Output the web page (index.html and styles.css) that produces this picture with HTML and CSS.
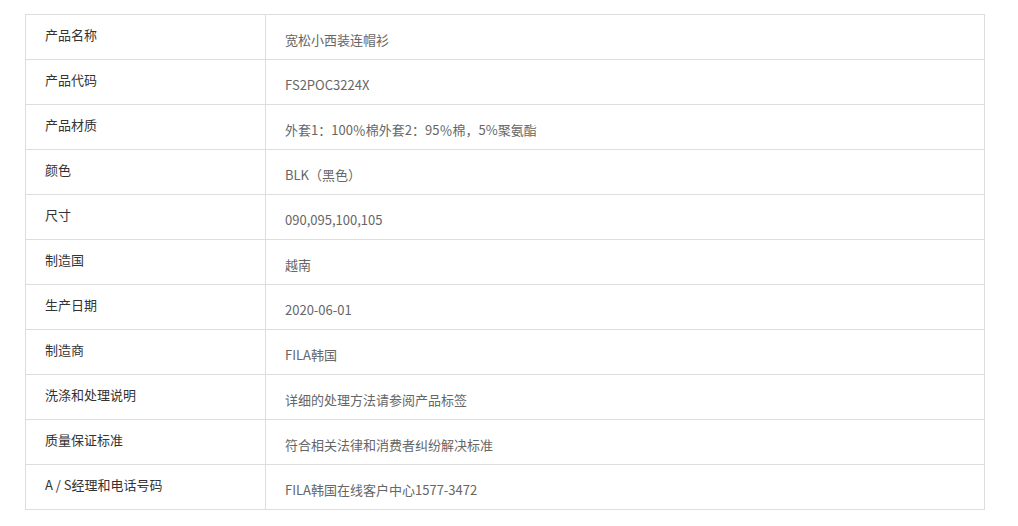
FILE: index.html
```html
<!DOCTYPE html>
<html lang="zh">
<head>
<meta charset="utf-8">
<link rel="stylesheet" href="styles.css">
</head>
<body>
<table class="spec">
  <tr><th>产品名称</th><td>宽松小西装连帽衫</td></tr>
  <tr><th>产品代码</th><td>FS2POC3224X</td></tr>
  <tr><th>产品材质</th><td>外套1：100％棉外套2：95％棉，5%聚氨酯</td></tr>
  <tr><th>颜色</th><td>BLK（黑色）</td></tr>
  <tr><th>尺寸</th><td>090,095,100,105</td></tr>
  <tr><th>制造国</th><td>越南</td></tr>
  <tr><th>生产日期</th><td>2020-06-01</td></tr>
  <tr><th>制造商</th><td>FILA韩国</td></tr>
  <tr><th>洗涤和处理说明</th><td>详细的处理方法请参阅产品标签</td></tr>
  <tr><th>质量保证标准</th><td>符合相关法律和消费者纠纷解决标准</td></tr>
  <tr><th>A / S经理和电话号码</th><td>FILA韩国在线客户中心1577-3472</td></tr>
</table>
</body>
</html>
```
FILE: styles.css
```css
html, body {
  margin: 0;
  padding: 0;
  background: #fff;
}
body {
  padding: 14px 0 0 25px;
  font-family: "Noto Sans CJK SC", "Noto Sans", sans-serif;
  font-size: 13px;
}
.spec {
  border-collapse: collapse;
  width: 960px;
}
.spec th, .spec td {
  border: 1px solid #dddddd;
  height: 45px;
  box-sizing: border-box;
  padding: 0 0 0 19px;
  text-align: left;
  font-weight: normal;
  line-height: 17px;
}
.spec th {
  width: 240px;
  color: #333;
  vertical-align: top;
  padding-top: 11px;
}
.spec td {
  color: #666;
  vertical-align: top;
  padding-top: 16px;
}
```
